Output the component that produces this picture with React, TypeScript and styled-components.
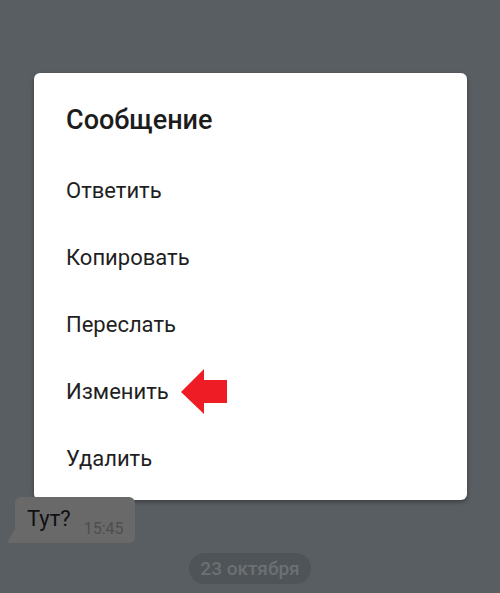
import React from 'react';
import styled, { createGlobalStyle } from 'styled-components';

const GlobalStyle = createGlobalStyle`
  html, body {
    margin: 0;
    padding: 0;
    background: #595e62;
    font-family: Roboto, "Noto Sans", sans-serif;
  }
`;

const Screen = styled.div`
  width: 500px;
  height: 593px;
  overflow: hidden;
  display: flex;
  flex-direction: column;
  background: #595e62;
`;

const Dialog = styled.div`
  margin: 73px 33px 0 34px;
  height: 427px;
  box-sizing: border-box;
  background: #fff;
  border-radius: 6px;
  box-shadow: 0 2px 4px rgba(0, 0, 0, 0.35);
  padding: 0 0 0 32px;
  display: flex;
  flex-direction: column;
`;

const Title = styled.h2`
  margin: 0;
  height: 84px;
  padding-top: 10px;
  box-sizing: border-box;
  display: flex;
  align-items: center;
  font-size: 27px;
  font-weight: 500;
  color: #1c1c1c;
`;

const Item = styled.div`
  height: 67px;
  display: flex;
  align-items: center;
  gap: 12px;
  font-size: 22px;
  color: #1f1f1f;
`;

const Chat = styled.div`
  display: flex;
  flex-direction: column;
  align-items: flex-start;
  padding: 0 0 0 7px;
`;

const Bubble = styled.div`
  position: relative;
  margin-top: -3px;
  margin-left: 8px;
  height: 46px;
  width: 120px;
  box-sizing: border-box;
  background: #696969;
  border-radius: 6px 6px 6px 0;
  display: flex;
  align-items: center;
  padding: 0 0 0 12px;

  &::before {
    content: '';
    position: absolute;
    left: -8px;
    bottom: 0;
    width: 8px;
    height: 14px;
    background: #696969;
    clip-path: polygon(100% 0, 100% 100%, 0 100%);
  }
`;

const BubbleText = styled.span`
  font-size: 22px;
  color: #111;
  margin-top: -4px;
`;

const BubbleTime = styled.span`
  font-size: 16px;
  color: #4e4e4e;
  margin: 16px 0 0 13px;
`;

const DatePill = styled.div`
  align-self: center;
  margin-top: 10px;
  height: 31px;
  padding: 0 11px;
  border-radius: 16px;
  background: #4f5458;
  color: #6c7073;
  font-size: 19px;
  font-weight: 500;
  display: flex;
  align-items: center;
`;

const Arrow = () => (
  <svg width="47" height="45" viewBox="0 0 47 45">
    <polygon points="0,23 23,0 23,11 46,11 46,34 23,34 23,45" fill="#ee1c25" />
  </svg>
);

export default function App() {
  return (
    <>
      <GlobalStyle />
      <Screen>
        <Dialog>
          <Title>Сообщение</Title>
          <Item>Ответить</Item>
          <Item>Копировать</Item>
          <Item>Переслать</Item>
          <Item>
            Изменить
            <Arrow />
          </Item>
          <Item>Удалить</Item>
        </Dialog>
        <Chat>
          <Bubble>
            <BubbleText>Тут?</BubbleText>
            <BubbleTime>15:45</BubbleTime>
          </Bubble>
        </Chat>
        <DatePill>23 октября</DatePill>
      </Screen>
    </>
  );
}
